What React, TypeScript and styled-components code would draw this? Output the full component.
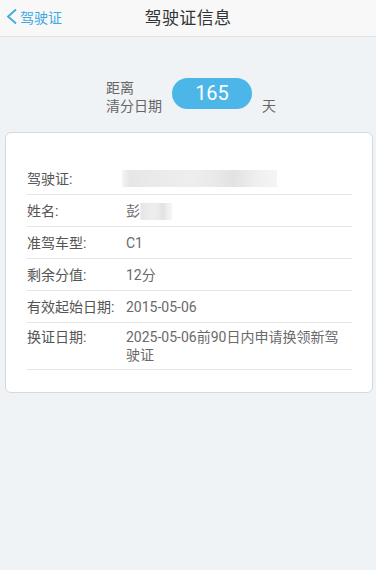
import React from 'react'
import styled, { createGlobalStyle } from 'styled-components'

const GlobalStyle = createGlobalStyle`
  html, body {
    margin: 0;
    padding: 0;
    background: #eff3f6;
    font-family: Roboto, "Noto Sans CJK SC", sans-serif;
  }
  #root {
    min-height: 570px;
    background: #eff3f6;
  }
`

const rows = [
  { label: '姓名:', value: '彭', blur: 32 },
  { label: '准驾车型:', value: 'C1' },
  { label: '剩余分值:', value: '12分' },
  { label: '有效起始日期:', value: '2015-05-06' },
  { label: '换证日期:', value: '2025-05-06前90日内申请换领新驾驶证', multi: true },
]

const App: React.FC = () => {
  return (
    <StyledPage>
      <GlobalStyle />
      <StyledHeader>
        <StyledBack>
          <svg width="13" height="17" viewBox="0 0 13 17">
            <path d="M11 1.5 L3 8.5 L11 15.5" fill="none" stroke="#3ea9e2" strokeWidth="1.8" />
          </svg>
          <span>驾驶证</span>
        </StyledBack>
        <StyledTitle>驾驶证信息</StyledTitle>
      </StyledHeader>

      <StyledCountdown>
        <StyledCountLabel>
          <div>距离</div>
          <div>清分日期</div>
        </StyledCountLabel>
        <StyledPill>165</StyledPill>
        <StyledUnit>天</StyledUnit>
      </StyledCountdown>

      <StyledCardWrap>
        <StyledCard>
          <StyledRow>
            <StyledLabel>驾驶证:</StyledLabel>
            <StyledValue>
              <StyledMask $width={155} />
            </StyledValue>
          </StyledRow>
          {rows.map((r) => (
            <StyledRow key={r.label} $multi={r.multi}>
              <StyledLabel>{r.label}</StyledLabel>
              <StyledValue>
                {r.value}
                {r.blur && <StyledMask $width={r.blur} $light />}
              </StyledValue>
            </StyledRow>
          ))}
        </StyledCard>
      </StyledCardWrap>
    </StyledPage>
  )
}

const StyledPage = styled.div`
  width: 376px;
  min-height: 570px;
  background: #eff3f6;
`

const StyledHeader = styled.div`
  position: relative;
  height: 36px;
  background: #f8f8f8;
  border-bottom: 1px solid #dfe2e4;
  display: flex;
  align-items: center;
  justify-content: center;
`

const StyledBack = styled.div`
  position: absolute;
  left: 5px;
  top: 0;
  height: 33px;
  display: flex;
  align-items: center;
  gap: 2px;
  color: #3ea9e2;
  font-size: 14px;
`

const StyledTitle = styled.div`
  font-size: 17px;
  color: #333;
  margin-top: -4px;
  letter-spacing: 0.4px;
`

const StyledCountdown = styled.div`
  display: flex;
  align-items: flex-start;
  justify-content: center;
  gap: 10px;
  margin-top: 42px;
  padding-left: 6px;
`

const StyledCountLabel = styled.div`
  font-size: 14px;
  line-height: 18px;
  color: #666;
`

const StyledPill = styled.div`
  width: 80px;
  height: 31px;
  margin-top: -1px;
  border-radius: 16px;
  background: #4db6e9;
  color: #fff;
  font-size: 20px;
  line-height: 31px;
  text-align: center;
`

const StyledUnit = styled.div`
  font-size: 14px;
  line-height: 18px;
  color: #666;
  margin-top: 18px;
`

const StyledCardWrap = styled.div`
  padding: 17px 3px 0 5px;
`

const StyledCard = styled.div`
  background: #fff;
  border: 1px solid #d3d9de;
  border-radius: 6px;
  padding: 30px 20px 22px 21px;
`

const StyledRow = styled.div<{ $multi?: boolean }>`
  display: flex;
  align-items: flex-start;
  padding: ${(p) => (p.$multi ? '5px 0 5px' : '7px 0 6px')};
  border-bottom: 1px solid #e2e4e6;
  font-size: 14px;
  line-height: 18px;
`

const StyledLabel = styled.div`
  width: 99px;
  flex-shrink: 0;
  color: #555;
`

const StyledValue = styled.div`
  flex: 1;
  color: #6a6a6a;
  display: flex;
  align-items: center;
  flex-wrap: wrap;
`

const StyledMask = styled.div<{ $width: number; $light?: boolean }>`
  width: ${(p) => p.$width}px;
  height: 17px;
  margin-left: ${(p) => (p.$light ? '0' : '-4px')};
  background: linear-gradient(
    90deg,
    #f4f4f4 0%,
    #e6e6e6 5%,
    #ebebeb 25%,
    #eeeeee 45%,
    #e9e9e9 60%,
    #e2e2e2 72%,
    #eeeeee 85%,
    #f5f5f5 100%
  );
`

export default App
